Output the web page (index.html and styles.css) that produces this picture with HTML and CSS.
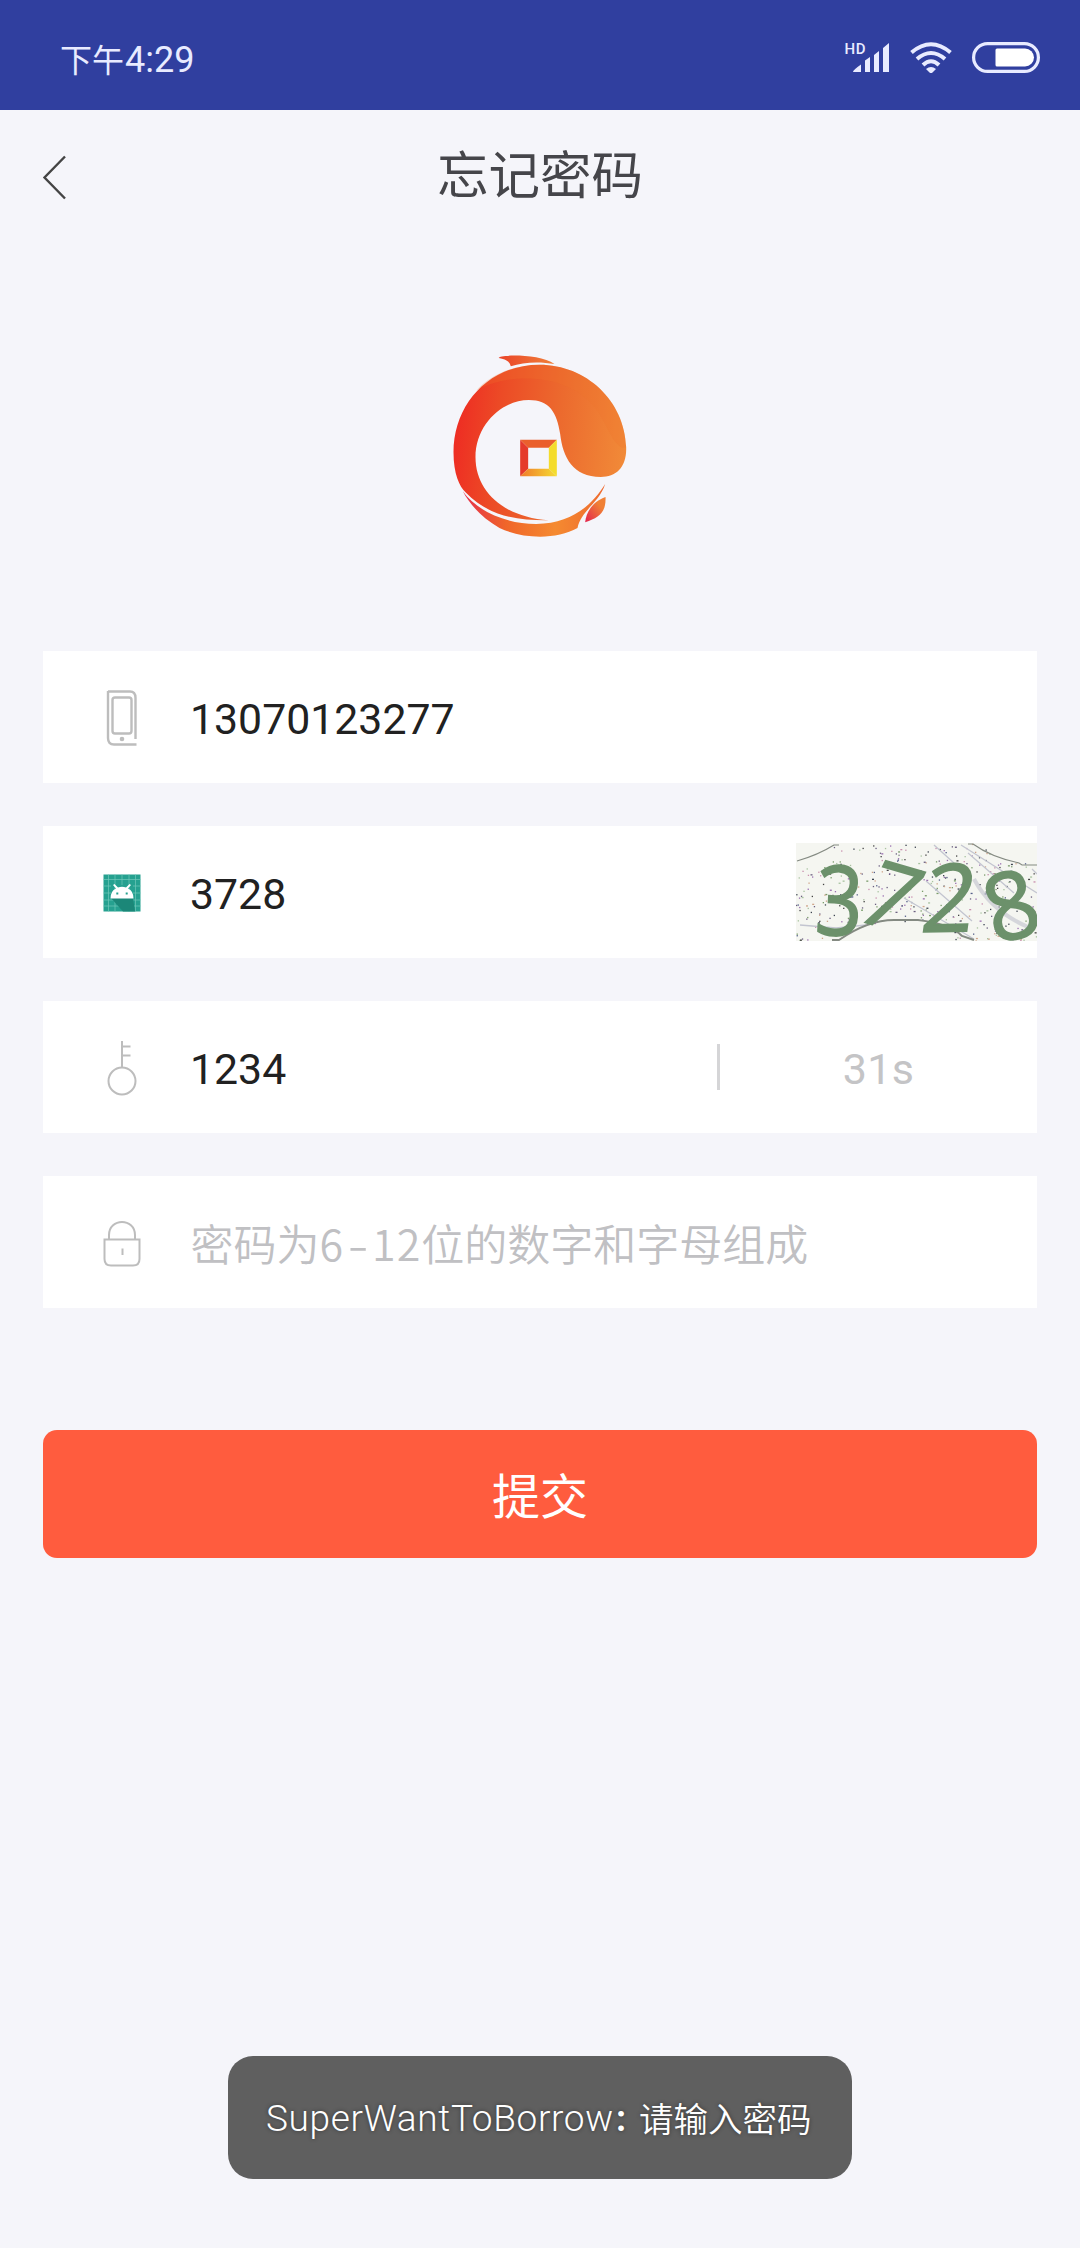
FILE: index.html
```html
<!DOCTYPE html>
<html lang="zh-CN">
<head>
<meta charset="utf-8">
<title>忘记密码</title>
<link rel="stylesheet" href="styles.css">
</head>
<body>
<header class="status">
  <div class="clock"><span class="clock-cn">下午</span><span class="clock-num">4:29</span></div>
  <svg class="signal" width="46" height="32" viewBox="0 0 46 32">
    <text class="hd" x="-0.5" y="12">HD</text>
    <path d="M8 30q0-2 8-7.500V30H8zM20 18.500l5-3.500V30h-5zM29 13l5-4V30h-5zM38 6l6-5V30h-6z"/>
  </svg>
  <svg class="wifi" width="44" height="32" viewBox="0 0 44 32">
    <path class="arc" d="M2.500 10.500Q22-6 41.500 10.500M8 17Q22 5 36 17M14 23Q22 15.500 30 23"/>
    <path d="M17 27q5-4 10 0l-3.500 3.500q-1.500 1-3 0z"/>
  </svg>
  <svg class="battery" width="68" height="31" viewBox="0 0 68 31">
    <rect class="shell" x="1.600" y="1.600" width="64.800" height="27.800" rx="13.900"/>
    <path d="M25 6.500H53a9 9 0 0 1 0 18H25q-1.500 0-1.500-1.500V8q0-1.500 1.500-1.500z"/>
  </svg>
</header>

<nav class="bar">
  <svg class="back" width="26" height="46" viewBox="0 0 26 46"><path d="M23 2.500L2.500 23.500L23 44.500"/></svg>
  <h1 class="title">忘记密码</h1>
</nav>

<main class="main">
  <svg class="logo" width="174" height="182" viewBox="41 43 521 546">
    <defs>
      <linearGradient id="body" x1="0" y1="0.45" x2="1" y2="0.55">
        <stop offset="0" stop-color="#ee2c23"/><stop offset="0.25" stop-color="#ec4b26"/>
        <stop offset="0.6" stop-color="#ec6a2e"/><stop offset="1" stop-color="#f18a38"/>
      </linearGradient>
      <linearGradient id="belly" x1="0" y1="0" x2="1" y2="0">
        <stop offset="0" stop-color="#e5304b"/><stop offset="0.3" stop-color="#f0652a"/><stop offset="0.65" stop-color="#f58a30"/><stop offset="1" stop-color="#ee6a30"/>
      </linearGradient>
      <linearGradient id="tail" x1="0" y1="1" x2="1" y2="0">
        <stop offset="0" stop-color="#e3224d"/><stop offset="0.7" stop-color="#f08035"/>
      </linearGradient>
      <linearGradient id="fin" x1="0" y1="0" x2="1" y2="0">
        <stop offset="0" stop-color="#ea4428"/><stop offset="1" stop-color="#f0803a"/>
      </linearGradient>
      <linearGradient id="coin" x1="0" y1="0" x2="1" y2="0">
        <stop offset="0" stop-color="#f07a2a"/><stop offset="1" stop-color="#f5dc33"/>
      </linearGradient>
    </defs>
    <path fill="url(#body)" d="M560 320C556 180 440 72 300 72C150 72 42 190 42 335C42 400 60 438 78 455C150 530 240 540 328 539C190 530 108 450 108 350C108 250 190 178 268 178C330 178 352 215 362 280C370 350 400 409 484 409C530 409 562 380 560 320Z"/>
    <path fill="#f0742d" opacity="0.25" d="M110 150C200 95 400 90 480 220C510 270 530 330 560 320C556 180 440 72 300 72C220 72 150 105 110 150Z"/>
    <path fill="url(#belly)" d="M70 452C110 510 200 550 290 550C400 548 460 490 497 430C480 485 425 510 414 562C350 598 250 595 180 562C125 530 90 490 70 452Z"/>
    <path fill="url(#tail)" d="M437 545C440 510 465 480 498 469C500 515 480 530 437 545Z"/>
    <path fill="url(#fin)" d="M178 52C175 42 300 38 345 70C300 62 250 64 214 77C210 62 200 56 178 52Z"/>
    <path fill="#e53a2b" d="M242 297L266 321V384L242 407Z"/>
    <path fill="#ea5f2c" d="M242 297H352L328 321H266Z"/>
    <path fill="#f4dc2c" d="M352 297V407L328 384V321Z"/>
    <path fill="url(#coin)" d="M242 407L266 384H328L352 407Z"/>
  </svg>

  <section class="form">
    <div class="field">
      <svg class="icon" width="40" height="56" viewBox="0 0 40 56">
        <path class="line thick" d="M6 1.500H28Q33.500 1.500 33.500 8V49M34.500 54.500H12Q6 54.500 6 48V1"/>
        <rect class="line thick" x="10.500" y="7.500" width="19" height="36" rx="2.500"/>
        <circle class="dot" cx="20" cy="49" r="2.300"/>
      </svg>
      <span class="value">13070123277</span>
    </div>

    <div class="field">
      <svg class="icon" width="40" height="56" viewBox="0 0 40 56">
        <rect x="1.500" y="9.500" width="37" height="37" fill="#26a190"/>
        <path stroke="#71c7ba" stroke-width="0.700" fill="none" d="M6.500 9.500V46.500M33.500 9.500V46.500M13 9.500V46.500M20 9.500V20M27 9.500V46.500M1.500 14.500H38.500M1.500 41H38.500M1.500 35H38.500M1.500 21H9M31 21H38.500M1.500 28H9M31 28H38.500"/>
        <path fill="#1b8778" d="M9 33L21 46.500H33L31 33Z"/>
        <path fill="#fff" d="M8.500 33.500Q8.500 26 14 23.500L11 20L12.500 19L16 22.500Q20 21 24 22.500L27.500 19L29 20L26 23.500Q31.500 26 31.500 33.500Z"/>
        <path fill="#26a190" d="M14.300 27.500h2v2h-2zM23.700 27.500h2v2h-2z"/>
      </svg>
      <span class="value">3728</span>
      <svg class="captcha" width="241" height="98" viewBox="0 0 241 98">
        <rect width="241" height="98" fill="#f5f6f1"/>
        <g id="specks"></g>
        <g class="scratch">
          <path d="M138 2L158 20M130 38L176 78M108 55L178 96M165 2L241 50M172 10L218 50M4 82L40 85L70 82M236 26L241 31"/>
          <path class="wide" d="M178 36Q195 68 232 84"/>
        </g>
        <path class="curve" d="M1 18Q22 12 38 2H43M172 1H177Q195 14 223 20L226 22H241"/>
        <path class="curve bold" d="M36 97H43Q72 77 98 77H122Q155 81 166 93L178 97"/>
        <g class="glyphs">
          <text transform="translate(18 91) rotate(3) scale(0.88 1.03)">3</text>
          <text transform="matrix(.89 .26 -.43 .886 57 76)">7</text>
          <text transform="translate(123 89) rotate(-1) skewX(-9) scale(.98 1)">2</text>
          <text transform="translate(199 102) rotate(-16) scale(.98 1)">8</text>
        </g>
      </svg>
    </div>

    <div class="field">
      <svg class="icon" width="40" height="56" viewBox="0 0 40 56">
        <path class="line" d="M20 1V27.500M20 6.500H28.500M20 15.500H28.500"/>
        <circle class="line" cx="20" cy="41" r="13.500"/>
      </svg>
      <span class="value">1234</span>
      <span class="divider"></span>
      <span class="count">31s</span>
    </div>

    <div class="field">
      <svg class="icon" width="40" height="56" viewBox="0 0 40 56">
        <path class="line" d="M2.500 24.500H37.500V44Q37.500 50.500 31 50.500H9Q2.500 50.500 2.500 44ZM7 24.500V20C7 2.500 33 2.500 33 20V24.500M20.500 33.500V40"/>
      </svg>
      <span class="hint">密码为<span class="range">6<span class="dash">-</span>12</span>位的数字和字母组成</span>
    </div>
  </section>

  <button class="submit">提交</button>
</main>

<div class="toast"><span class="toast-app">SuperWantToBorrow</span><b class="toast-colon">:</b><span class="toast-msg">请输入密码</span></div>
<script src="specks.js"></script>
</body>
</html>
```
FILE: styles.css
```css
* { box-sizing: border-box; }

body {
  margin: 0;
  height: 2248px;
  display: flex;
  flex-direction: column;
  background: #f5f5fa;
  font-family: Roboto, "Noto Sans CJK SC", sans-serif;
  overflow: hidden;
}

svg { display: block; flex: none; }

.status {
  height: 110px;
  padding: 5px 40px 0 60px;
  display: flex;
  align-items: center;
  background: #303f9f;
  color: #e8ebff;
  fill: #e8ebff;
}
.clock { display: flex; align-items: baseline; margin-right: auto; padding-top: 5px; line-height: 44px; }
.clock-cn { font-size: 32px; }
.clock-num { font-size: 36px; margin-left: 1px; }
.signal { overflow: visible; }
.hd { font: 500 15px Roboto, sans-serif; letter-spacing: 0.5px; }
.wifi { margin-left: 18px; }
.arc { fill: none; stroke: #e8ebff; stroke-width: 4; }
.battery { margin-left: 19px; fill: #fff; }
.shell { fill: none; stroke: #e8ebff; stroke-width: 3.2; }

.bar {
  height: 134px;
  padding: 0 42px;
  display: grid;
  grid-template-columns: 26px 1fr 26px;
  align-items: center;
}
.back { fill: none; stroke: #444; stroke-width: 2.4; }
.title {
  margin: 0;
  text-align: center;
  font-size: 51.5px;
  font-weight: 400;
  line-height: 70px;
  color: #45454a;
}

.main { padding: 111px 43px 0; display: flex; flex-direction: column; }
.logo { align-self: center; }

.form { margin-top: 114px; display: flex; flex-direction: column; gap: 43px; }
.field {
  height: 132px;
  padding-left: 58.5px;
  display: flex;
  align-items: center;
  background: #fff;
}
.line { fill: none; stroke: #bdbdbd; stroke-width: 2; }
.thick { stroke-width: 2.4; }
.dot { fill: #bdbdbd; }
.icon { margin-top: 2px; }
.value { margin-left: 48.5px; padding-top: 3px; font-size: 42.8px; line-height: 60px; color: #212121; }
.hint { margin-left: 49px; font-size: 43px; line-height: 60px; font-weight: 350; color: #c0c0c3; font-family: "Noto Sans CJK SC", sans-serif; }
.range { letter-spacing: 1px; }
.dash { display: inline-block; width: 28px; text-align: center; letter-spacing: 0; transform: scaleX(1.4); }
.divider { margin-left: auto; width: 3px; height: 46px; background: #d5d5d7; }
.count { width: 317px; padding-top: 3px; text-align: center; font-size: 43px; letter-spacing: 0.3px; color: #c4c4c6; }

.captcha { margin-left: auto; }
.glyphs { font: 400 94px "Open Sans", sans-serif; fill: #6c916b; stroke: #6c916b; stroke-width: 1.6; }
.scratch { fill: none; stroke: #c3c5d0; stroke-width: 1.3; }
.wide { stroke-width: 4; opacity: 0.65; }
.curve { fill: none; stroke: #848a82; stroke-width: 1.1; }
.bold { stroke-width: 2; }

.submit {
  margin-top: 122px;
  height: 128px;
  padding: 0 0 3px;
  border: 0;
  border-radius: 14px;
  background: #ff5c3e;
  color: #fff;
  font: 400 48px "Noto Sans CJK SC", sans-serif;
}

.toast {
  width: 624px;
  height: 123px;
  margin: auto auto 69px;
  padding: 2px 0 0 38px;
  display: flex;
  align-items: center;
  border-radius: 25px;
  background: #5f5f5f;
  color: #fff;
  line-height: 48px;
  text-shadow: 0 0 4px rgba(0, 0, 0, 0.45);
}
.toast-app { font-size: 37px; font-weight: 300; letter-spacing: 0.65px; width: 348px; padding-top: 1px; white-space: nowrap; }
.toast-colon { font-family: Roboto, sans-serif; font-size: 36px; width: 25px; padding-left: 2px; }
.toast-msg { font: 350 34.5px/48px "Noto Sans CJK SC", sans-serif; margin-top: -3px; }
```
FILE: specks.js
```js
// Scatter coloured noise over the captcha with a fixed seed.
(function () {
  var seed = 20;
  function next() {
    seed = (seed * 16807) % 2147483647;
    return seed / 2147483647;
  }
  var colors = ["#3d4450", "#6b5f80", "#444", "#9a6fb0", "#c98fae", "#7b9b6b", "#555f8a", "#cfa58a", "#a8c3a0"];
  var group = document.getElementById("specks");
  for (var i = 0; i < 430; i++) {
    var x = next() * 241;
    var y = next() * 98;
    if (y > 80 && x > 50 && x < 150) continue;
    if (y < 20 && (x < 35 || x > 200)) continue;
    var dot = document.createElementNS("http://www.w3.org/2000/svg", "rect");
    dot.setAttribute("x", x.toFixed(1));
    dot.setAttribute("y", y.toFixed(1));
    dot.setAttribute("width", next() > 0.8 ? 2 : 1.3);
    dot.setAttribute("height", 1.3);
    dot.setAttribute("fill", colors[Math.floor(next() * colors.length)]);
    group.appendChild(dot);
  }
})();
```
